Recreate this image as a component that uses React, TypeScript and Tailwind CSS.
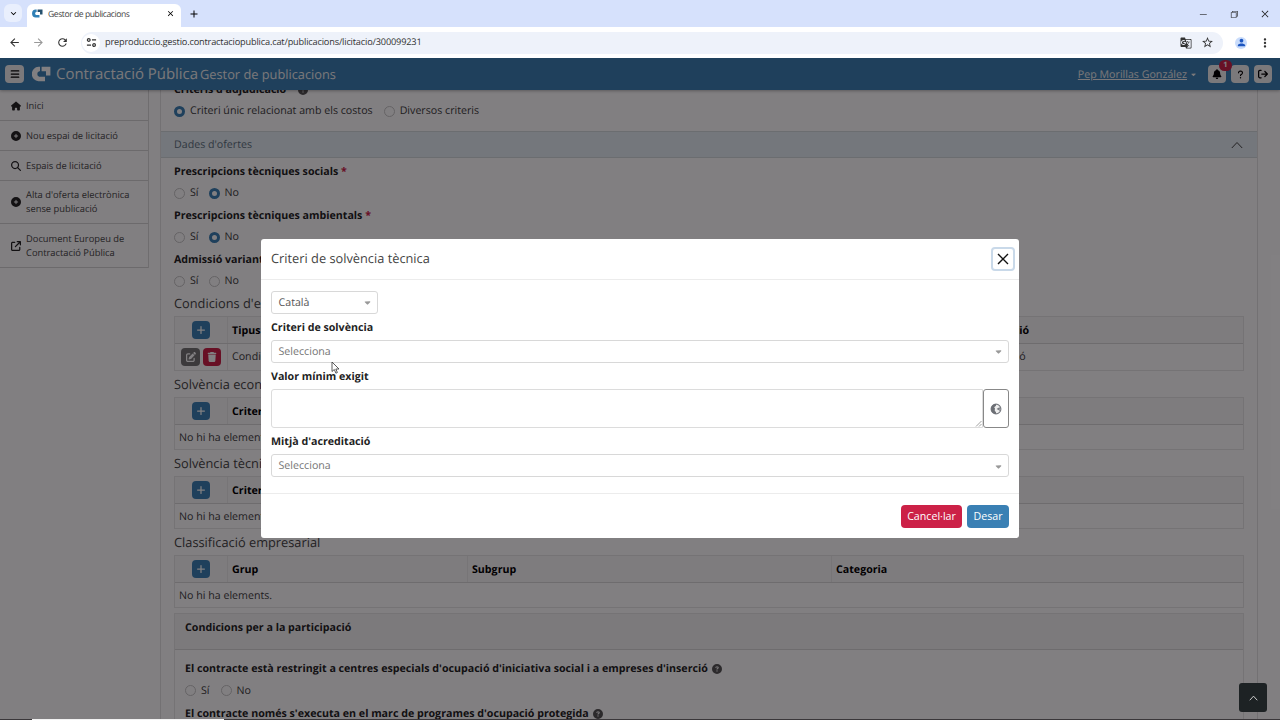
import React from 'react';
import {
  FaHouse, FaCirclePlus, FaMagnifyingGlass, FaArrowUpRightFromSquare, FaBars, FaBell, FaQuestion,
  FaPlus, FaPenToSquare, FaTrash, FaCircleQuestion, FaCaretDown, FaArrowRightFromBracket,
} from 'react-icons/fa6';
import {
  MdArrowBack, MdArrowForward, MdRefresh, MdClose, MdAdd, MdExpandMore, MdStarBorder, MdPerson,
  MdMoreVert, MdGTranslate,
} from 'react-icons/md';
import { VscChromeRestore, VscChromeClose, VscChromeMinimize } from 'react-icons/vsc';

const Logo = ({ className, main, accent }: { className: string; main: string; accent: string }) => (
  <svg viewBox="0 0 19 16" className={className}>
    <path d="M8 .8H6.5A6.5 7 0 0 0 6.500 15.200H13V10.800H7.200A2.600 2.900 0 0 1 7.200 5.200H8Z" fill={main} />
    <path d="M9.600.8H18.400V9.600H14V5.200H9.600Z" fill={accent} />
  </svg>
);

const BrowserChrome = () => (
  <div className="shrink-0">
    <div className="flex h-[27px] items-end bg-[#d6e1fc]">
      <div className="mb-[5px] ml-1 flex h-[18px] w-[18px] items-center justify-center rounded-md bg-[#e9effd]">
        <MdExpandMore size={11} />
      </div>
      <div className="ml-[5px] flex h-[23px] w-[154px] items-center rounded-t-md bg-white pb-1 pl-[5px]">
        <Logo className="h-[9px] w-[11px]" main="#2f7fb5" accent="#25506e" />
        <span className="ml-[5px] w-[118px] text-[8.6px] leading-3 tracking-[-0.5px] text-[#444] [letter-spacing:-0.45px]">Gestor de publicacions</span>
        <MdClose size={9} />
      </div>
      <MdAdd size={12} className="mb-[7px] ml-[7px]" />
      <div className="mb-2 ml-auto flex items-center gap-[21px] pr-[10px] text-[#222]">
        <VscChromeMinimize size={10} />
        <VscChromeRestore size={10} />
        <VscChromeClose size={10} />
      </div>
    </div>
    <div className="flex h-[31px] items-center bg-white text-[#333]">
      <MdArrowBack size={13} className="ml-2" />
      <MdArrowForward size={13} className="ml-[11px] text-[#999]" />
      <MdRefresh size={13} className="ml-[11px]" />
      <div className="ml-3 flex h-[22px] w-[1142px] shrink-0 items-center rounded-full bg-[#eef2fa]">
        <div className="ml-px flex h-[18px] w-[18px] items-center justify-center rounded-full bg-white">
          <svg viewBox="0 0 12 12" className="h-[11px] w-[11px]" fill="none" stroke="currentColor" strokeWidth="1.300">
            <circle cx="3" cy="3.200" r="1.500" />
            <path d="M6.500 3.200H11M1 8.800h4.500" />
            <circle cx="8.800" cy="8.800" r="1.500" />
          </svg>
        </div>
        <span className="ml-[5px] pb-px text-[9.2px] tracking-[-0.17px]">preproduccio.gestio.contractaciopublica.cat/publicacions/licitacio/300099231</span>
        <MdGTranslate size={12} className="mr-[9px] ml-auto" />
        <MdStarBorder size={13} className="mr-[9px]" />
      </div>
      <div className="ml-[12px] flex h-3 w-3 shrink-0 items-center justify-center rounded-full bg-[#c9dcfb]">
        <MdPerson size={11} className="text-[#1b55c0]" />
      </div>
      <MdMoreVert size={14} className="ml-[11px] shrink-0" />
    </div>
  </div>
);

const TopBar = () => (
  <header className="relative z-10 flex h-8 shrink-0 items-center bg-[#3a80b4] pr-2 pl-[5px] text-[#f0f0f0] shadow-[0_1px_3px_rgba(0,0,0,.3)]">
    <div className="flex h-[18px] w-[19px] items-center justify-center rounded-sm bg-[#f3f3f3] text-black">
      <FaBars size={10} />
    </div>
    <Logo className="ml-2 h-4 w-[19px]" main="#fff" accent="#fff" />
    <span className="ml-[5px] text-[14.93px]">Contractació Pública</span>
    <span className="ml-[2px] pt-px text-[12.8px]">Gestor de publicacions</span>
    <span className="ml-auto pt-px text-[10.67px] underline">Pep Morillas González</span>
    <FaCaretDown size={7} className="ml-[3px]" />
    <div className="ml-[11px] flex gap-[5px] text-black">
      <div className="relative flex h-[18px] w-[18px] items-center justify-center rounded-sm bg-[#f3f3f3]">
        <FaBell size={10} />
        <span className="absolute -top-[5px] left-[11px] flex h-[11px] w-[13px] items-center justify-center rounded-full bg-[#cc2147] text-[7.5px] font-bold text-white">1</span>
      </div>
      <div className="flex h-[18px] w-[18px] items-center justify-center rounded-sm bg-[#f3f3f3]"><FaQuestion size={9} /></div>
      <div className="flex h-[18px] w-[18px] items-center justify-center rounded-sm bg-[#f3f3f3]"><FaArrowRightFromBracket size={10} /></div>
    </div>
  </header>
);

const menu = [
  { icon: FaHouse, label: 'Inici', height: 'h-[31px] pt-px' },
  { icon: FaCirclePlus, label: 'Nou espai de licitació', height: 'h-[30px]' },
  { icon: FaMagnifyingGlass, label: 'Espais de licitació', height: 'h-[30px]' },
  { icon: FaCirclePlus, label: "Alta d'oferta electrònica sense publicació", height: 'h-[43px]' },
  { icon: FaArrowUpRightFromSquare, label: 'Document Europeu de Contractació Pública', height: 'h-[44px]' },
];

const Sidebar = () => (
  <nav className="w-[149px] shrink-0 self-start border-r border-[#dadada]">
    {menu.map(({ icon: Icon, label, height }) => (
      <div key={label} className={`flex items-center border-b border-[#d4d4d4] pl-[11px] text-[9.33px] leading-[14px] text-[#444] ${height}`}>
        <Icon size={10} className="shrink-0 text-[#222]" />
        <span className="ml-[5px] w-[112px]">{label}</span>
      </div>
    ))}
  </nav>
);

const Radio = ({ label, checked }: { label: string; checked?: boolean }) => (
  <span className="flex items-center">
    <span className={checked
      ? 'h-[11px] w-[11px] rounded-full border-[3px] border-[#3a80b4] bg-white'
      : 'h-[11px] w-[11px] rounded-full border border-[#c6c6c6]'} />
    <span className="ml-[5px]">{label}</span>
  </span>
);

const YesNo = ({ label, no, required }: { label: string; no?: boolean; required?: boolean }) => (
  <div>
    <div className="h-[22px] font-bold leading-[24px] text-[#222]">
      {label} {required && <span className="text-[#cc2147]">*</span>}
    </div>
    <div className="flex h-[22px] items-center gap-[10px]">
      <Radio label="Sí" />
      <Radio label="No" checked={no} />
    </div>
  </div>
);

const AddButton = () => (
  <span className="flex h-[18px] w-[18px] items-center justify-center rounded-sm bg-[#3a80b4] text-white">
    <FaPlus size={10} />
  </span>
);

interface DataTableProps {
  title: string;
  titleHeight: string;
  grid: string;
  columns: string[];
  row?: string[];
}

const DataTable: React.FC<DataTableProps> = ({ title, titleHeight, grid, columns, row }) => (
  <section>
    <h2 className={`flex items-center text-[12.8px] text-[#444] ${titleHeight}`}>{title}</h2>
    <div className="border border-[#e6e6e6]">
      <div className={`grid h-[27px] border-b border-[#d8d8d8] bg-[#f9f9f9] ${grid}`}>
        <div className="flex items-center justify-center border-r border-[#ebebeb]"><AddButton /></div>
        {columns.map((c) => (
          <div key={c} className="flex items-center border-r border-[#ebebeb] pt-0.5 pl-1 font-bold text-black last:border-r-0">{c}</div>
        ))}
      </div>
      {row ? (
        <div className={`grid h-[26px] ${grid}`}>
          <div className="flex items-center justify-center gap-[3px] border-r border-[#ebebeb] text-white">
            <span className="flex h-[18px] w-[19px] items-center justify-center rounded-sm bg-[#757575]"><FaPenToSquare size={10} /></span>
            <span className="flex h-[18px] w-[18px] items-center justify-center rounded-sm bg-[#cc2147]"><FaTrash size={10} /></span>
          </div>
          {row.map((c) => <div key={c} className="flex items-center pl-1">{c}</div>)}
        </div>
      ) : (
        <div className="flex h-[24px] items-center pt-px pl-1">No hi ha elements.</div>
      )}
    </div>
  </section>
);

const Main = () => (
  <main className="-mt-[10px] h-[641px] w-[1098px] shrink-0 border-x border-[#e2e2e2] text-[10.67px] text-[#3c3c3c]">
    <div className="px-[13px]">
      <div className="flex h-[18px] items-center gap-3 pt-px font-bold text-[#222]">
        Criteris d'adjudicació <FaCircleQuestion size={10} className="text-[#555]" />
      </div>
      <div className="flex h-[26px] items-center gap-[11px]">
        <Radio label="Criteri únic relacionat amb els costos" checked />
        <Radio label="Diversos criteris" />
      </div>
    </div>
    <div className="mt-[7px] flex h-[27px] items-center justify-between border-y border-[#d3dadd] bg-[#e4eff4] pr-[14px] pl-[13px] text-[10.67px] text-[#5d7180]">
      Dades d'ofertes
      <svg viewBox="0 0 12 8" className="h-2 w-3" fill="none" stroke="#444" strokeWidth="1"><path d="M.8 7 6 1.500 11.200 7" /></svg>
    </div>
    <div className="px-[13px] pt-0.5">
      <YesNo label="Prescripcions tècniques socials" no required />
      <YesNo label="Prescripcions tècniques ambientals" no required />
      <YesNo label="Admissió variants" required />
      <DataTable title="Condicions d'execució" titleHeight="h-[24px]" grid="grid-cols-[53px_742px_1fr]"
        columns={['Tipus', 'Descripció']} row={['Condicions especials', 'Descripció']} />
      <DataTable title="Solvència econòmica i financera" titleHeight="h-[26px] pt-px" grid="grid-cols-[53px_1fr]" columns={['Criteri']} />
      <DataTable title="Solvència tècnica" titleHeight="h-[26px] pt-px" grid="grid-cols-[53px_1fr]" columns={['Criteri']} />
      <DataTable title="Classificació empresarial" titleHeight="h-[26px] pt-px" grid="grid-cols-[53px_240px_364px_1fr]"
        columns={['Grup', 'Subgrup', 'Categoria']} />
      <section className="mt-[5px] border border-[#e6e6e6]">
        <div className="h-[36px] border-b border-[#d8d8d8] bg-[#f4f4f4] px-[10px] pt-[6px] font-bold text-[#222]">
          Condicions per a la participació
        </div>
        <div className="px-[10px] pt-[8px]">
          <div className="flex h-[21px] items-center gap-1 pt-px font-bold text-[#222]">
            El contracte està restringit a centres especials d'ocupació d'iniciativa social i a empreses d'inserció
            <FaCircleQuestion size={10} className="text-[#555]" />
          </div>
          <div className="flex h-[22px] items-center gap-[11px] pt-px"><Radio label="Sí" /><Radio label="No" /></div>
          <div className="flex h-[23px] items-center gap-1 pt-0.5 font-bold text-[#222]">
            El contracte només s'executa en el marc de programes d'ocupació protegida
            <FaCircleQuestion size={10} className="text-[#555]" />
          </div>
        </div>
      </section>
    </div>
  </main>
);

const Select = ({ value, className }: { value: string; className: string }) => (
  <div className={`flex h-[23px] items-center justify-between rounded-[3px] border border-[#d8d8d8] pr-[5px] pl-[6.5px] ${className}`}>
    {value}
    <FaCaretDown size={9} className="text-[#999]" />
  </div>
);

const Dialog = () => (
  <div className="mt-[181px] flex h-[299px] w-[758px] flex-col rounded-[3px] bg-white text-[10.67px] text-[#222]">
    <div className="flex h-[41px] items-center justify-between border-b border-[#ececec] pr-1 pl-[10px]">
      <h1 className="text-[12.8px] text-[#444]">Criteri de solvència tècnica</h1>
      <button className="flex h-6 w-6 items-center justify-center rounded-[4px] border-2 border-[#c9d9e9]">
        <svg viewBox="0 0 12 12" className="h-3 w-3" stroke="#111" strokeWidth="1.400"><path d="m1 1 10 10M11 1 1 11" /></svg>
      </button>
    </div>
    <div className="px-[10px] pt-[11px]">
      <Select value="Català" className="w-[107px] text-[#555]" />
      <div className="h-[26px] font-bold leading-[28px]">Criteri de solvència</div>
      <Select value="Selecciona" className="text-[#757575]" />
      <div className="h-[26px] font-bold leading-[28px]">Valor mínim exigit</div>
      <div className="flex h-[39px]">
        <div className="flex flex-1 items-end justify-end rounded-l-[3px] border border-[#dcdcdc]">
          <svg viewBox="0 0 7 7" className="h-[7px] w-[7px]" stroke="#888" strokeWidth=".8"><path d="m1 6.500 5.500-5.500M4 6.500 6.500 4" /></svg>
        </div>
        <div className="flex w-[26px] items-center justify-center rounded-[3px] border border-[#888]">
          <svg viewBox="0 0 12 12" className="h-3 w-3">
            <circle cx="6" cy="6" r="4.900" fill="#eee" stroke="#777a80" strokeWidth="1.100" />
            <path d="M6 1A5 5 0 0 0 6 11V9L4.800 8V6.500L5 5.500 4.200 4.200 6 2.800Z" fill="#6c6f75" />
            <path d="M10.600 4.200 8.400 4.700 6.600 6 8.400 7.100 10.600 8.200V6.900L9 6.100l1.800-.6Z" fill="#777a80" />
          </svg>
        </div>
      </div>
      <div className="h-[26px] font-bold leading-[28px]">Mitjà d'acreditació</div>
      <Select value="Selecciona" className="pt-px text-[#757575]" />
    </div>
    <div className="mt-auto flex h-[45px] items-center justify-end gap-[5px] border-t border-[#ececec] pr-[10px] text-white">
      <button className="h-[23px] w-[61px] rounded-sm bg-[#cc2147]">Cancel·lar</button>
      <button className="h-[23px] w-[42px] rounded-sm bg-[#3a80b4]">Desar</button>
    </div>
  </div>
);

export default function App() {
  return (
    <div className="flex h-[720px] w-[1280px] flex-col overflow-hidden bg-[#3a373a] font-['Open_Sans',sans-serif] [text-rendering:geometricPrecision]">
      <BrowserChrome />
      <div className="relative flex min-h-0 flex-1 flex-col overflow-hidden bg-white">
        <TopBar />
        <div className="flex min-h-0 flex-1 gap-[11px] overflow-hidden">
          <Sidebar />
          <Main />
        </div>
        <div className="absolute inset-0 z-20 flex items-start justify-center bg-[#050005]/50">
          <Dialog />
        </div>
        <div className="absolute right-[13px] bottom-[7px] z-30 flex h-[29px] w-[28px] items-center justify-center rounded-[3px] bg-[#1d2224]">
          <svg viewBox="0 0 12 8" className="h-[6px] w-[9px]" fill="none" stroke="#ddd" strokeWidth="1.200"><path d="M1 7 6 1.500 11 7" /></svg>
        </div>
        <svg viewBox="0 0 9 13" className="absolute top-[303px] left-[331px] z-30 h-[13px] w-[9px]">
          <path d="M1 1v9.500l2.300-2 1.600 3.700 1.500-.7-1.600-3.500H8Z" fill="#fff" stroke="#333" strokeWidth=".8" />
        </svg>
      </div>
      <div className="flex h-px shrink-0 pl-8"><div className="w-48 bg-[#f2f2f2]" /></div>
    </div>
  );
}
